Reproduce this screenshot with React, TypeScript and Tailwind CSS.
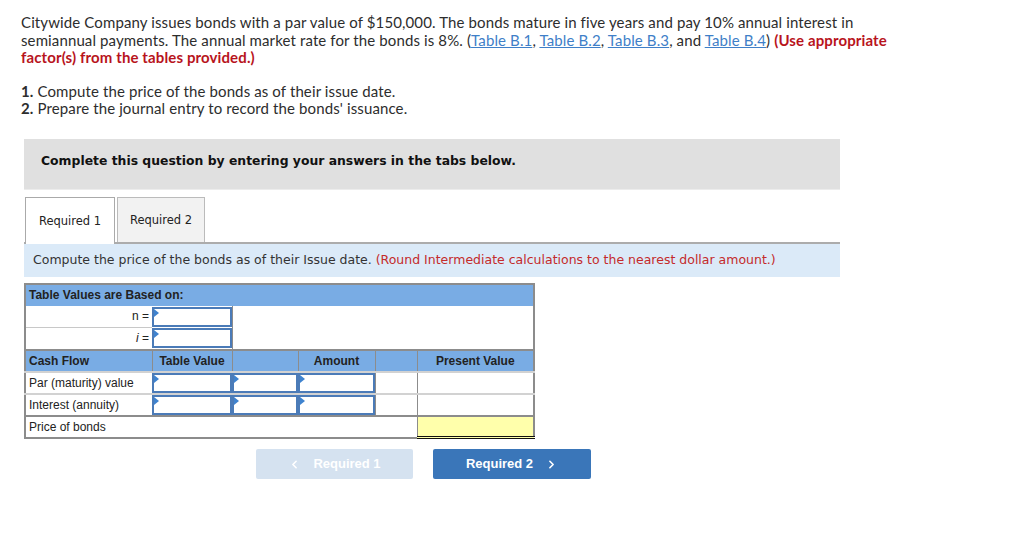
import React from 'react';
import { ChevronLeft, ChevronRight } from 'lucide-react';

// Small blue input cell with a flag in the top-left corner
function InputCell() {
  return (
    <div className="relative h-[20px] border-2 border-[#4b7bb8] bg-white">
      <span className="absolute left-0 top-0 h-0 w-0 border-t-[4px] border-b-[4px] border-l-[5px] border-t-transparent border-b-transparent border-l-[#3f83cf]" />
    </div>
  );
}

const links = ['Table B.1', 'Table B.2', 'Table B.3', 'Table B.4'];

export default function App() {
  return (
    <div className="min-h-[550px] bg-white text-[#222]">
      {/* Question text */}
      <div className="w-[940px] px-[21px] pt-[14px] font-['Lato',sans-serif] text-[15px] leading-[17.5px] tracking-[0.12px] text-[#2d2d2d]">
        <p>
          Citywide Company issues bonds with a par value of $150,000. The bonds mature in five years and pay 10% annual interest in
          semiannual payments. The annual market rate for the bonds is 8%. (
          <a className="text-[#3f7fc8] underline">{links[0]}</a>,{' '}
          <a className="text-[#3f7fc8] underline">{links[1]}</a>,{' '}
          <a className="text-[#3f7fc8] underline">{links[2]}</a>, and{' '}
          <a className="text-[#3f7fc8] underline">{links[3]}</a>){' '}
          <span className="font-bold text-[#b8141c]">(Use appropriate factor(s) from the tables provided.)</span>
        </p>
        <div className="mt-[16px]">
          <p><span className="font-bold">1.</span> Compute the price of the bonds as of their issue date.</p>
          <p><span className="font-bold">2.</span> Prepare the journal entry to record the bonds' issuance.</p>
        </div>
      </div>

      <div className="ml-[24px] mt-[21px] w-[816px]">
        {/* Instruction box */}
        <div className="h-[51px] border-b border-[#ececec] bg-[#e0e0e0] pl-[17px] pt-[13px] font-['DejaVu_Sans',sans-serif] text-[12.4px] font-bold text-[#111]">
          Complete this question by entering your answers in the tabs below.
        </div>

        {/* Tabs */}
        <div className="mt-[7px] flex gap-[2px] pl-[1px] font-['DejaVu_Sans',sans-serif] text-[11.5px] text-[#222]">
          <div className="relative z-10 -mb-[2px] flex h-[47px] w-[90px] items-center justify-center border border-b-0 border-[#aaa] bg-white pt-[3px]">
            Required 1
          </div>
          <div className="flex h-[45px] w-[88px] items-center justify-center border border-b-0 border-[#bbb] bg-[#f2f2f2] pt-[3px]">
            Required 2
          </div>
        </div>

        {/* Info bar */}
        <div className="flex h-[35px] items-center border-t-2 border-[#acacac] bg-[#dbeaf8] pl-[9px] font-['DejaVu_Sans',sans-serif] text-[12.5px] text-[#333]">
          Compute the price of the bonds as of their Issue date.&nbsp;
          <span className="text-[#c42b2b]">(Round Intermediate calculations to the nearest dollar amount.)</span>
        </div>

        {/* Table */}
        <table className="mt-[6px] w-[509px] table-fixed border-collapse border-2 border-[#8c8c8c] font-['Liberation_Sans',Arial,sans-serif] text-[12px] text-[#222]">
          <colgroup>
            <col className="w-[127px]" />
            <col className="w-[80px]" />
            <col className="w-[66px]" />
            <col className="w-[77px]" />
            <col className="w-[42px]" />
            <col className="w-[117px]" />
          </colgroup>
          <tbody>
            <tr className="h-[22px] bg-[#79ace4]">
              <td colSpan={6} className="px-[3px] font-bold">Table Values are Based on:</td>
            </tr>
            <tr className="h-[22px]">
              <td className="border-b border-[#c8c8c8] px-[3px] text-right">n =</td>
              <td className="p-0"><InputCell /></td>
              <td colSpan={4} rowSpan={2} className="border-l border-[#8c8c8c]" />
            </tr>
            <tr className="h-[22px]">
              <td className="px-[3px] text-right italic">i&nbsp;<span className="not-italic">=</span></td>
              <td className="p-0"><InputCell /></td>
            </tr>
            <tr className="h-[22px] border-t-2 border-[#8c8c8c] bg-[#79ace4] font-bold">
              <td className="px-[3px]">Cash Flow</td>
              <td className="border-l border-[#8c8c8c] text-center">Table Value</td>
              <td className="border-l border-[#8c8c8c]" />
              <td className="border-l border-[#8c8c8c] text-center">Amount</td>
              <td className="border-l border-[#8c8c8c]" />
              <td className="border-l border-[#8c8c8c] text-center">Present Value</td>
            </tr>
            {['Par (maturity) value', 'Interest (annuity)'].map((label) => (
              <tr key={label} className="h-[22px] border-t-2 border-[#d2d2d2]">
                <td className="px-[3px]">{label}</td>
                <td className="p-0"><InputCell /></td>
                <td className="p-0"><InputCell /></td>
                <td className="p-0"><InputCell /></td>
                <td className="border-l border-[#8c8c8c]" />
                <td className="border-l border-[#8c8c8c]" />
              </tr>
            ))}
            <tr className="h-[22px] border-t-2 border-[#8c8c8c]">
              <td colSpan={5} className="px-[3px]">Price of bonds</td>
              <td className="border-l border-b-[3px] border-double border-l-[#8c8c8c] border-b-[#111] bg-[#ffffab]" />
            </tr>
          </tbody>
        </table>

        {/* Navigation buttons */}
        <div className="mt-[10px] flex gap-[20px] pl-[232px] font-['Liberation_Sans',Arial,sans-serif] text-[13px] font-bold text-white">
          <button className="flex h-[30px] w-[157px] items-center justify-center gap-[12px] rounded-[2px] bg-[#d5e2f0]">
            <ChevronLeft size={13} strokeWidth={3} />
            <span>Required 1</span>
          </button>
          <button className="flex h-[30px] w-[158px] items-center justify-center gap-[12px] rounded-[2px] bg-[#3a76b9]">
            <span>Required 2</span>
            <ChevronRight size={13} strokeWidth={3} />
          </button>
        </div>
      </div>
    </div>
  );
}
